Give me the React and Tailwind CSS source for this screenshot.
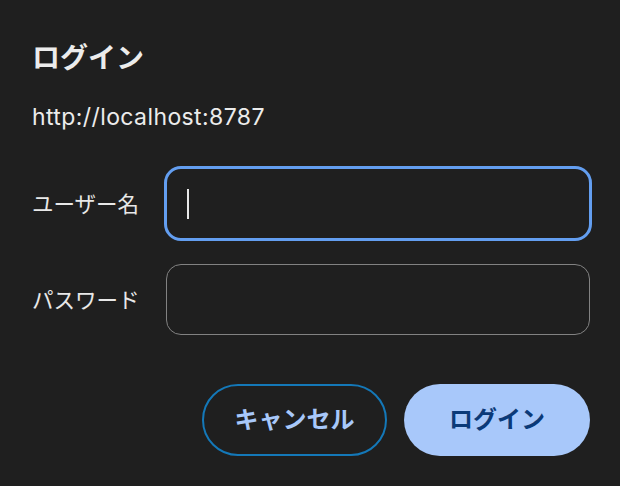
import React from 'react';

function Field({ label, focused }) {
  return (
    <div className="flex items-center">
      <div className="w-[134px] text-[21.5px] leading-[28px] text-[#e8e8e8]">{label}</div>
      <div
        className={`flex h-[71px] flex-1 items-center rounded-[15px] border pl-5 ${
          focused
            ? 'border-transparent outline-[3px] outline-offset-[-1px] outline-[#639ef0] outline-solid'
            : 'border-[#828282]'
        }`}
      >
        {focused && <span className="h-[30px] w-[2px] bg-[#e8e8e8]" />}
      </div>
    </div>
  );
}

export default function App() {
  return (
    <div
      className="flex h-[486px] w-full flex-col bg-[#1f1f1f] pl-8 pr-[30px] pt-[40px]"
      style={{ fontFamily: 'Inter, "Noto Sans CJK JP", sans-serif' }}
    >
      <h1 className="text-[28px] font-bold leading-[36px] text-[#ececec]">ログイン</h1>
      <p className="mt-[27px] text-[23px] leading-[28px] tracking-[0.4px] text-[#ececec]">http://localhost:8787</p>

      <div className="mt-[37px] flex flex-col gap-[25px]">
        <Field label="ユーザー名" focused />
        <Field label="パスワード" />
      </div>

      <div className="mt-[49px] flex justify-end gap-[17px]">
        <button className="h-[72px] w-[185px] rounded-full border-2 border-[#1478b8] text-[24px] font-bold text-[#a8c8fa]">
          キャンセル
        </button>
        <button className="h-[72px] w-[186px] rounded-full bg-[#a8c8fa] text-[24px] font-bold text-[#0b3a78]">
          ログイン
        </button>
      </div>
    </div>
  );
}
